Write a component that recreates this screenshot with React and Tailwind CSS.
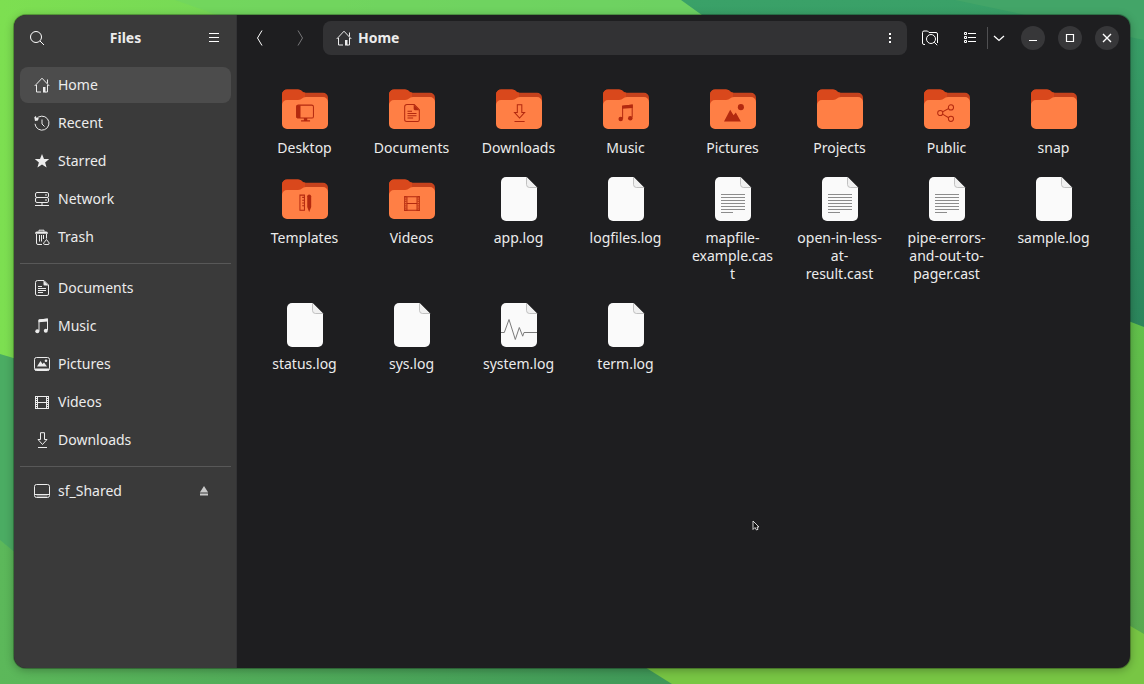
import { useState } from "react";
import clsx from "clsx";

// 16x16 symbolic glyphs, shared by the sidebar and the folder emblems
const glyphs = {
  home: (
    <>
      <path d="M.7 9 8 1.2 15.3 9" />
      <path d="M13.5 2.5v4M2.5 8v7H7M13.5 8v7H11" />
      <path d="M9 10h2.5v5.5H9z" fill="currentColor" stroke="none" />
    </>
  ),
  recent: (
    <>
      <path d="M2.2 4.2A7 7 0 1 1 1 8.8M8 4.5V9l2.5 2.5" />
      <path d="M.3 2.2 1.8 1l.8 2 2.2-.2L4 5.4 1 6z" fill="currentColor" stroke="none" />
    </>
  ),
  star: (
    <path
      d="m8 1 2 5h5.2l-4.1 3.4 1.5 5.2L8 11.5l-4.6 3.1 1.5-5.2L.8 6H6z"
      fill="currentColor"
      stroke="none"
    />
  ),
  network: (
    <>
      <rect x="1.5" y="1.5" width="13" height="5" rx="1.5" />
      <rect x="1.5" y="6.5" width="13" height="5" rx="1.5" />
      <path d="M11 4h2M11 9h2M8 12v2M1 14.5h14" />
    </>
  ),
  trash: (
    <>
      <path d="M5 2.5V1.2h5v1.3M2.5 5v9q0 1.5 1.5 1.5h4M12.5 5v4.5M5.5 6v6.5M7.5 6v6.5M9.5 6v4" />
      <path d="M1 4.7q0-2.2 2-2.2h9q2 0 2 2.2z" fill="currentColor" stroke="none" />
      <path d="m12.5 10.5 2.6 3.4q.3 1.6-1 1.6h-3.6q-1.3-.2-.7-1.6z" />
    </>
  ),
  documents: (
    <>
      <path d="M3.5.5H10L14.5 5v9q0 1.5-1.5 1.5H3.5q-2 0-2-1.5V2.5q0-2 2-2z" />
      <path d="M9.5.5l5 5h-4q-1 0-1-1z" fill="currentColor" stroke="none" />
      <path d="M4 6.5h4M4 8.5h8M4 10.5h8M4 12.5h5" />
    </>
  ),
  music: (
    <>
      <path d="M5 13V2l8.5-1v11" />
      <path d="M4.5 1.5 14 .5v3l-9.5.8z" fill="currentColor" stroke="none" />
      <circle cx="3.3" cy="13.3" r="2" fill="currentColor" stroke="none" />
      <circle cx="11.8" cy="12.7" r="2" fill="currentColor" stroke="none" />
    </>
  ),
  pictures: (
    <>
      <rect x=".5" y="1.5" width="15" height="13" rx="2" />
      <path d="M3 10.5 6.5 5l2 3L10 6.5l3 4z" fill="currentColor" stroke="none" />
      <path d="M1 12.5h14v2H1z" fill="currentColor" stroke="none" />
      <circle cx="12" cy="4.7" r="1.3" fill="currentColor" stroke="none" />
    </>
  ),
  videos: (
    <>
      <path d="M3.5 2v13M12.5 2v13M1 2.5h14M3 8.5h10M1 14.5h14" />
      <path d="M1.5 2v13M14.5 2v13" />
      <path d="M2.5 2v13M13.5 2v13" strokeDasharray="1 1" />
    </>
  ),
  downloads: (
    <>
      <path d="M6.5.7h4v6.8H13l-4.5 5L4 7.5h2.5z" />
      <path d="M4 15.5h9" />
    </>
  ),
  drive: (
    <>
      <rect x=".5" y="1.5" width="15" height="13" rx="2" />
      <path d="M1 11.5h14" />
      <path d="M2.5 13h11" opacity=".7" />
    </>
  ),
  search: (
    <>
      <circle cx="7" cy="7" r="5.5" />
      <path d="m11 11 4 4" />
    </>
  ),
  menu: <path d="M3 3.5h10M3 7.5h10M3 11.5h10" />,
  back: <path d="M10 .5 5.5 8l4.5 7.5" />,
  forward: <path d="M6 .5 10.5 8 6 15.5" />,
  dots: (
    <path d="M7 3h2v2H7zM7 7h2v2H7zM7 11h2v2H7z" fill="currentColor" stroke="none" />
  ),
  folderSearch: (
    <>
      <path d="M3 14.5H2Q.5 14.5.5 13V2.5Q.5 1 2 1h3.5L7 2.5h7q1.5 0 1.5 1.5v9" />
      <circle cx="9" cy="9" r="4.5" />
      <path d="m12.2 12.2 3 3" />
    </>
  ),
  list: (
    <>
      <path d="M2.5 2.5h2v2h-2zM2.5 6.5h2v2h-2zM2.5 10.5h2v2h-2z" />
      <path d="M6 3.5h8M6 7.5h8M6 11.5h8" />
    </>
  ),
  chevron: <path d="m3 6 5 4.5L13 6" strokeWidth="1.3" />,
  minimize: <path d="M4 10.5h8" />,
  maximize: <path d="M4.5 4.5h7v7h-7z" strokeWidth="1.2" />,
  close: <path d="m4 4 8 8M12 4l-8 8" strokeWidth="1.4" />,
  eject: (
    <path d="m8 3 4.2 6.5H3.8zM4 10.5h8v2H4z" fill="currentColor" stroke="none" />
  ),
  desktop: (
    <>
      <rect x=".5" y="1" width="15" height="11.5" rx="1.5" />
      <path d="M.5 1H4v11.5H.5z" fill="currentColor" stroke="none" />
      <path d="M7 12.5h3V15H7z" fill="currentColor" stroke="none" />
      <path d="M4.5 15h8" />
    </>
  ),
  landscape: (
    <>
      <path d="M0 15.5 5.5 5l3 5 2-2.5 4.5 8z" fill="currentColor" stroke="none" />
      <circle cx="15" cy="2.8" r="2.7" fill="currentColor" stroke="none" />
    </>
  ),
  share: (
    <>
      <circle cx="2" cy="8" r="2.3" />
      <circle cx="11.5" cy="3" r="2.3" />
      <circle cx="11.5" cy="13.2" r="2.3" />
      <path d="m4 7 5.5-3M4 9l5.5 3.2" />
    </>
  ),
  templates: (
    <>
      <path d="M3.5 1h4v13.5h-4zM5.5 3h2M5.5 5.5h2M5.5 8h2M5.5 10.5h2" />
      <path d="M10 2Q10 .5 11.7.5T13.5 2v9.5L11.7 16 10 11.5z" fill="currentColor" stroke="none" />
    </>
  ),
};

function Icon({ name }) {
  return (
    <svg
      viewBox="0 0 16 16"
      className="size-4 shrink-0"
      fill="none"
      stroke="currentColor"
      aria-hidden="true"
    >
      {glyphs[name]}
    </svg>
  );
}

function FolderIcon({ emblem }) {
  return (
    <svg viewBox="0 0 48 48" className="size-12 shrink-0" aria-hidden="true">
      <path
        d="M1 20V9.500a5 5 0 0 1 5-5h11c4 0 4 3.200 8 3.200h17a5 5 0 0 1 5 5V20z"
        fill="#c5421d"
      />
      <path d="M1 20V9.500a5 5 0 0 1 5-5h11c4 0 3.500 3.200 7 3.200V20z" fill="#d9481c" />
      <path
        d="M1 20a5 5 0 0 1 5-5h11c4 0 4-3 8-3h17a5 5 0 0 1 5 5v22a5 5 0 0 1-5 5H6a5 5 0 0 1-5-5z"
        fill="#ff7f45"
      />
      {emblem && (
        <g
          transform="translate(15 19) scale(1.125)"
          fill="none"
          stroke="currentColor"
          strokeWidth=".9"
          className="text-[#b3290f]"
        >
          {glyphs[emblem]}
        </g>
      )}
    </svg>
  );
}

function FileIcon({ kind }) {
  return (
    <svg viewBox="0 0 48 48" className="size-12 shrink-0" aria-hidden="true">
      <path
        d="M11 2h20.5L42 12.5V41a5 5 0 0 1-5 5H11a5 5 0 0 1-5-5V7a5 5 0 0 1 5-5z"
        fill="#fafafa"
      />
      <path d="M31.5 2v7.5q0 3 3 3H42" fill="#f0f0f0" stroke="#b4b4b4" strokeWidth=".8" />
      {kind === "text" && (
        <path
          d="M12 19.5h24M12 22.5h24M12 25.5h24M12 28.5h24M12 31.5h24M12 34.5h24M12 37.5h12"
          stroke="#8c8c8c"
        />
      )}
      {kind === "pulse" && (
        <path
          d="M6 31.5h3.3l4.7-13 6.300 20 4-12 3.400 8.700 1.300-3.700h13"
          fill="none"
          stroke="#7a7a7a"
        />
      )}
    </svg>
  );
}

const places = [
  [
    { name: "Home", icon: "home" },
    { name: "Recent", icon: "recent" },
    { name: "Starred", icon: "star" },
    { name: "Network", icon: "network" },
    { name: "Trash", icon: "trash" },
  ],
  [
    { name: "Documents", icon: "documents" },
    { name: "Music", icon: "music" },
    { name: "Pictures", icon: "pictures" },
    { name: "Videos", icon: "videos" },
    { name: "Downloads", icon: "downloads" },
  ],
  [{ name: "sf_Shared", icon: "drive", ejectable: true }],
];

// long names carry their own line breaks
const entries = [
  { name: "Desktop", folder: true, emblem: "desktop" },
  { name: "Documents", folder: true, emblem: "documents" },
  { name: "Downloads", folder: true, emblem: "downloads" },
  { name: "Music", folder: true, emblem: "music" },
  { name: "Pictures", folder: true, emblem: "landscape" },
  { name: "Projects", folder: true },
  { name: "Public", folder: true, emblem: "share" },
  { name: "snap", folder: true },
  { name: "Templates", folder: true, emblem: "templates" },
  { name: "Videos", folder: true, emblem: "videos" },
  { name: "app.log" },
  { name: "logfiles.log" },
  { name: "mapfile-\nexample.cas\nt", kind: "text" },
  { name: "open-in-less-\nat-\nresult.cast", kind: "text" },
  { name: "pipe-errors-\nand-out-to-\npager.cast", kind: "text" },
  { name: "sample.log" },
  { name: "status.log" },
  { name: "sys.log" },
  { name: "system.log", kind: "pulse" },
  { name: "term.log" },
];

function Wallpaper() {
  return (
    <svg
      viewBox="0 0 1144 684"
      preserveAspectRatio="none"
      className="absolute inset-0 size-full"
      aria-hidden="true"
    >
      <defs>
        <linearGradient id="lime" x1="0" x2="1" y1="0" y2="0">
          <stop offset="0" stopColor="#7ddf51" />
          <stop offset="1" stopColor="#68cc62" />
        </linearGradient>
        <linearGradient id="leaf" x1="0" x2="1" y1="0" y2="0">
          <stop offset="0" stopColor="#5cb85a" />
          <stop offset="1" stopColor="#3f9859" />
        </linearGradient>
        <linearGradient id="pine" x1="0" x2="0" y1="0" y2="1">
          <stop offset="0" stopColor="#3aa168" />
          <stop offset="1" stopColor="#2b855c" />
        </linearGradient>
        <linearGradient id="grass" x1="0" x2="0" y1="0" y2="1">
          <stop offset="0" stopColor="#62c14a" />
          <stop offset="1" stopColor="#58a850" />
        </linearGradient>
      </defs>
      <path d="M0 0h720v400H0z" fill="url(#lime)" />
      <path d="M175 0h530v30H260z" fill="#6fd363" opacity=".6" />
      <path d="M0 354 60 372v312H0z" fill="#4bac63" />
      <path d="M0 540 60 590 640 660l36 24H0z" fill="url(#leaf)" />
      <path d="M681 0h463v330L720 200V28z" fill="url(#pine)" />
      <path d="M955 0h189v40z" fill="#43a568" />
      <path d="M1110 314l34 13v310l-34 10z" fill="url(#grass)" />
      <path d="M640 664l480-44 24 14v50H672z" fill="#78c644" />
    </svg>
  );
}

function HeaderButton({ label, icon, narrow, disabled }) {
  return (
    <button
      type="button"
      aria-label={label}
      disabled={disabled}
      className={clsx(
        "flex h-[34px] shrink-0 items-center justify-center rounded-md",
        narrow ? "w-[22px]" : "w-[34px]",
        disabled ? "text-[#777779]" : "text-white"
      )}
    >
      <Icon name={icon} />
    </button>
  );
}

function WindowButton({ label, icon }) {
  return (
    <button
      type="button"
      aria-label={label}
      className="flex size-6 items-center justify-center rounded-full bg-[#373739] text-white"
    >
      <Icon name={icon} />
    </button>
  );
}

function Sidebar({ current, onSelect }) {
  return (
    <aside className="flex w-[223px] shrink-0 flex-col border-r border-[#333335] bg-[#3a3a3a] pl-1.5 pr-[5px]">
      <header className="flex h-[46px] items-center">
        <HeaderButton label="Search" icon="search" />
        <h1 className="flex-1 text-center font-bold">Files</h1>
        <HeaderButton label="Main menu" icon="menu" />
      </header>
      <nav className="mt-1.5" aria-label="Places">
        {places.map((group, i) => (
          <ul
            key={i}
            className={clsx(
              "flex flex-col gap-0.5",
              i > 0 && "mt-2 border-t border-[#585858] pt-1.5"
            )}
          >
            {group.map((place) => (
              <li
                key={place.name}
                className={clsx(
                  "flex h-9 items-center rounded-lg pr-[19px]",
                  place.name === current && "bg-[#4c4c4c]"
                )}
              >
                <a
                  href={`#${place.name}`}
                  onClick={() => onSelect(place.name)}
                  className="flex h-full flex-1 items-center gap-2 pl-3.5"
                >
                  <Icon name={place.icon} />
                  {place.name}
                </a>
                {place.ejectable && (
                  <button type="button" aria-label="Eject" className="text-[#c8c8c8]">
                    <Icon name="eject" />
                  </button>
                )}
              </li>
            ))}
          </ul>
        ))}
      </nav>
    </aside>
  );
}

function Toolbar({ current }) {
  return (
    <header className="flex h-[46px] items-center gap-1.5 pl-1.5 pr-[11px]">
      <HeaderButton label="Back" icon="back" />
      <HeaderButton label="Forward" icon="forward" disabled />
      <div className="flex h-[34px] min-w-0 flex-1 items-center justify-between rounded-lg bg-[#323234] pl-[13px]">
        <button type="button" className="flex items-center gap-1.5 font-bold">
          <Icon name="home" />
          {current}
        </button>
        <HeaderButton label="Folder options" icon="dots" />
      </div>
      <HeaderButton label="Search everywhere" icon="folderSearch" />
      <div className="flex items-center">
        <HeaderButton label="List view" icon="list" />
        <span className="h-[22px] w-px bg-[#505052]" />
        <HeaderButton label="View options" icon="chevron" narrow />
      </div>
      <div className="ml-[5px] flex gap-[13px]">
        <WindowButton label="Minimize" icon="minimize" />
        <WindowButton label="Maximize" icon="maximize" />
        <WindowButton label="Close" icon="close" />
      </div>
    </header>
  );
}

export default function App() {
  const [current, setCurrent] = useState("Home");

  return (
    <div className="relative flex min-h-screen px-3.5 pb-4 pt-[15px] font-['Noto_Sans',sans-serif] text-sm text-[#ececec]">
      <Wallpaper />
      <div className="relative flex flex-1 overflow-hidden rounded-xl bg-[#1e1e20] shadow-[0_0_0_1px_rgba(0,0,0,0.25),0_2px_10px_rgba(0,0,0,0.3)]">
        <Sidebar current={current} onSelect={setCurrent} />
        <main className="relative min-w-0 flex-1">
          <Toolbar current={current} />
          <ul className="grid grid-cols-8 gap-y-[18px] pb-6 pl-3.5 pr-[23px] pt-6">
            {entries.map((entry) => (
              <li key={entry.name} className="flex justify-center">
                <button type="button" className="flex w-[86px] flex-col items-center gap-1.5">
                  {entry.folder ? (
                    <FolderIcon emblem={entry.emblem} />
                  ) : (
                    <FileIcon kind={entry.kind} />
                  )}
                  <span className="w-full whitespace-pre-line text-center leading-[18px]">
                    {entry.name}
                  </span>
                </button>
              </li>
            ))}
          </ul>
          {/* mouse pointer */}
          <svg
            viewBox="0 0 8 12"
            className="pointer-events-none absolute left-[515px] top-[505px] h-3 w-2"
            aria-hidden="true"
          >
            <path d="M1 1v8.5l2-2L4.5 10 6 9.3 5 7h2z" fill="#111" stroke="#fff" strokeWidth=".8" />
          </svg>
        </main>
      </div>
    </div>
  );
}
